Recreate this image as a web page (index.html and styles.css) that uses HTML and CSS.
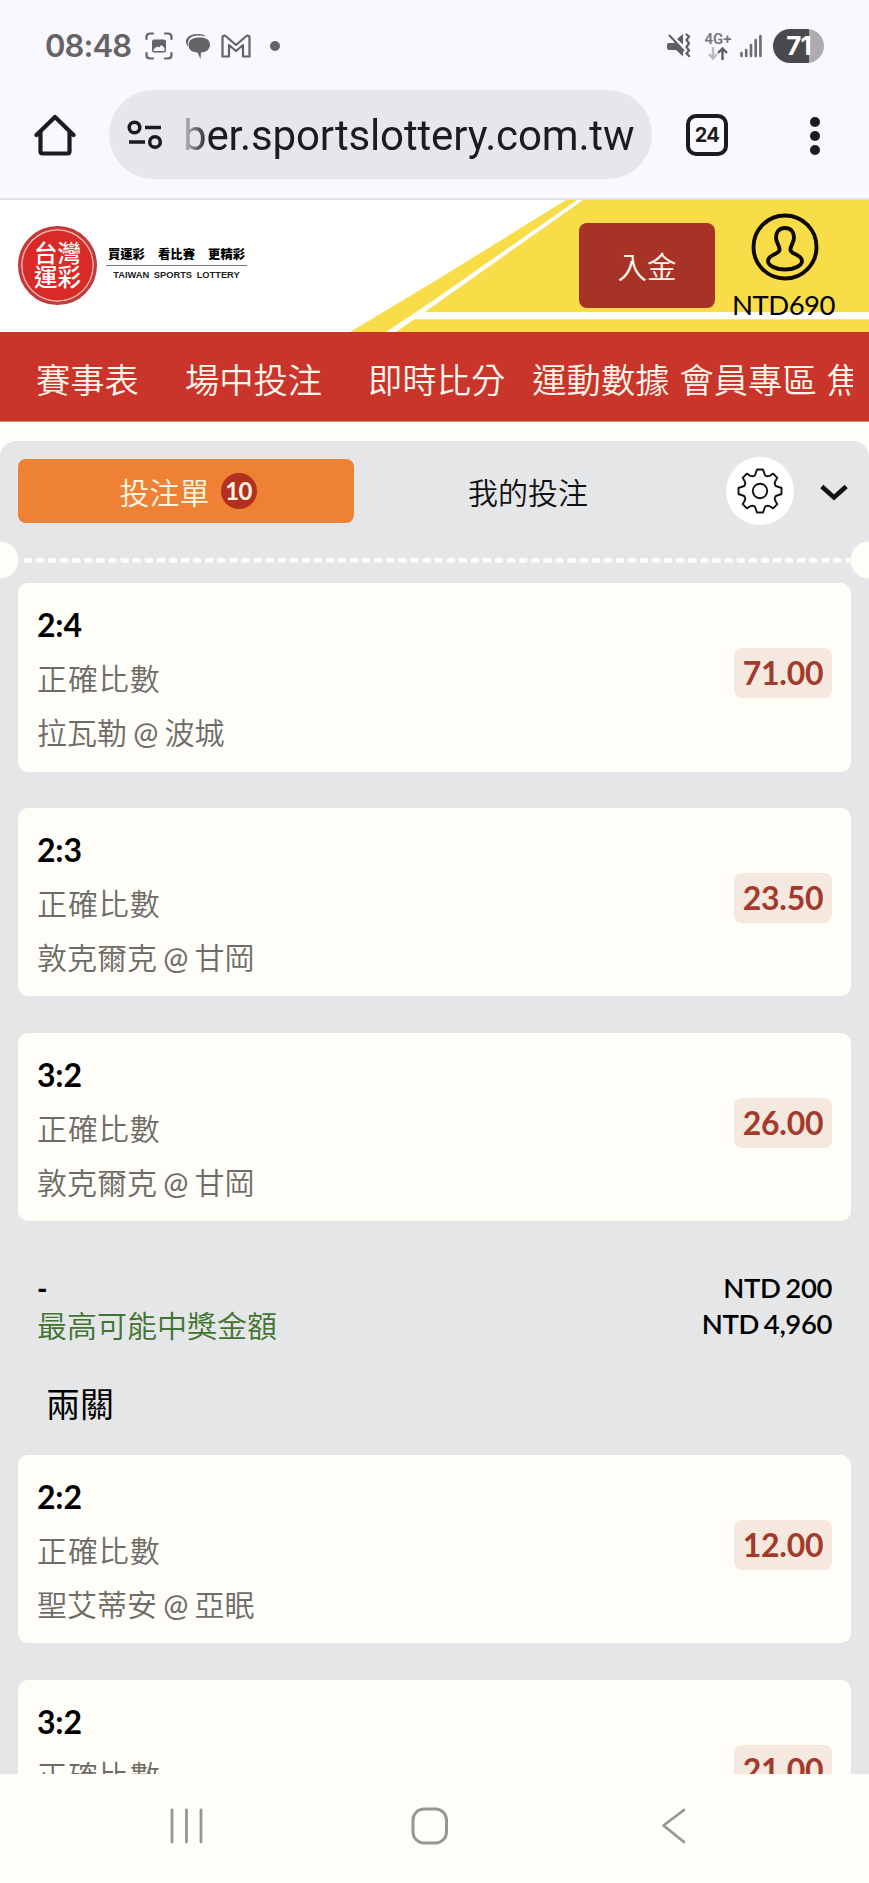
FILE: index.html
```html
<!DOCTYPE html>
<html lang="zh-Hant">
<head>
<meta charset="utf-8">
<title>台灣運彩</title>
<link rel="stylesheet" href="styles.css">
</head>
<body>
<div class="phone">
  <div class="status">
    <span class="clock">08:48</span>
    <svg class="i-shot" width="28" height="28" viewBox="0 0 28 28"><g fill="none" stroke="#646366" stroke-width="2.2" stroke-linecap="round"><path d="M1.5 7V5q0-3.500 3.500-3.500H8M20 1.500h3q3.500 0 3.500 3.500v2M26.500 21v2q0 3.500-3.500 3.500h-3M8 26.500H5q-3.500 0-3.500-3.500v-2"/></g><path fill="#646366" fill-rule="evenodd" d="M9 7.500h10q2 0 2 2v9q0 2-2 2H9q-2 0-2-2v-9q0-2 2-2zM8.500 17.500v1.500h11v-3l-3-3-2.500 2.500-2-1z"/></svg>
    <svg class="i-chat" width="26" height="26" viewBox="0 0 26 26" fill="#646366"><path d="M3 14Q-1 9 2.500 4.500Q6 .5 14 1q5 .3 7 2.500Q17 2.300 12 2.500 6 3 4 6.500 2 10 3 14z"/><path d="M13.500 4.500C20 4 25 6.500 25 11.500s-4 8-9 8L15.500 26l-3-6.500C7 19 3.500 17 3.500 12s4-7.200 10-7.500z"/></svg>
    <svg class="i-mail" width="30" height="24" viewBox="0 0 30 24"><path fill="none" stroke="#646366" stroke-width="2.200" stroke-linejoin="round" d="M1.500 3.500Q1.500 1.500 4 1.500L15 11 26 1.500q2.500 0 2.500 2v19H22V11l-7 6-7-6v11.500H1.500z"/></svg>
    <span class="dot"></span>
    <svg class="i-mute" width="26" height="26" viewBox="0 0 26 26"><g fill="#5f5e62"><path d="M1 11.500q0-1.500 2-1.500h5l1-1 8 8.500v6L10 17H3q-2 0-2-2zM11 6l6-5v10.500z"/></g><path d="M3 2l15 16" stroke="#5f5e62" stroke-width="2"/><path d="M20.500 1.500l2.500 2-2.500 3.500 2.500 3.500-2.500 3.500 2.500 3.500-2.500 3 2.500 2.500" fill="none" stroke="#5f5e62" stroke-width="2.200" stroke-linecap="round"/></svg>
    <span class="net"><b>4G+</b><svg width="22" height="13" viewBox="0 0 22 13" fill="none" stroke-width="2.400"><path stroke="#bbb9bf" d="M6 0v11M2 7l4 4.500L10 7"/><path stroke="#5f5e62" d="M15.500 13V2M11 6l4.500-4.500L20 6"/></svg></span>
    <svg class="i-sig" width="24" height="24" viewBox="0 0 24 24"><path stroke="#6d6c70" stroke-width="2.600" stroke-linecap="round" d="M2.500 19v3M7.200 16v6M12 11v11M16.700 6v16M21.400 2v20"/></svg>
    <span class="batt"><span>71</span></span>
  </div>

  <div class="toolbar">
    <svg class="i-home" width="42" height="42" viewBox="0 0 42 42"><path fill="none" stroke="#1d1b20" stroke-width="4.200" stroke-linecap="round" stroke-linejoin="round" d="M2.500 21L21 3l18.500 18M6.500 18v19.500q0 2 2 2h25q2 0 2-2V18"/></svg>
    <div class="url">
      <svg width="36" height="30" viewBox="0 0 36 30"><g fill="none" stroke="#1d1b20" stroke-width="3.500"><circle cx="7.500" cy="7.500" r="5.300"/><path d="M18 7.500h16M2 22h16"/><circle cx="28" cy="22" r="5.300"/></g></svg>
      <span class="host">ber.sportslottery.com.tw</span>
    </div>
    <span class="tabs-count">24</span>
    <span class="more"><i></i><i></i><i></i></span>
  </div>

  <header class="site">
    <svg class="stripes" width="869" height="132" viewBox="0 0 869 132"><path fill="#f8dd49" d="M350 132L435 81 566 0H869V132z"/><path fill="#fff" d="M386 132L434 100 577 0H583L434 105.500 396 132z"/><path fill="#fff" d="M424 112H869V119.300H414z"/></svg>
    <div class="seal"><span>台灣</span><span>運彩</span></div>
    <div class="slogan"><p class="zh"><span>買運彩</span><span>看比賽</span><span>更精彩</span></p><p class="en">TAIWAN SPORTS LOTTERY</p></div>
    <div class="deposit">入金</div>
    <div class="account">
      <svg width="68" height="68" viewBox="0 0 68 68"><g fill="none" stroke="#0c0a02" stroke-width="3.900"><circle cx="34" cy="34" r="31.500"/><path d="M34 15c-6.500 0-9 4.500-9 9.500 0 5.500 4 8.500 3.500 12.500-.5 4.500-11.500 4.500-11.500 11 0 5 8.500 8.500 17 8.500s17-3.500 17-8.500c0-6.500-11-6.500-11.500-11-.5-4 3.500-7 3.500-12.500 0-5-2.500-9.500-9-9.500z"/></g></svg>
      <span>NTD690</span>
    </div>
  </header>

  <nav class="menu"><a>賽事表</a><a>場中投注</a><a>即時比分</a><a>運動數據</a><a>會員專區</a><a class="cut">焦</a></nav>

  <main class="slip">
    <div class="slip-head">
      <div class="tab on">投注單<span class="badge">10</span></div>
      <div class="tab">我的投注</div>
      <span class="gear"><svg width="46" height="46" viewBox="-23 -23 46 46"><g fill="none" stroke="#111" stroke-width="1.900" stroke-linejoin="round"><circle r="7.200"/><path d="M-3 -21.500H3L5 -15.800Q7.500 -14 9.500 -15.200L13.200 -17.300 17.300 -13.200 15.200 -9.500Q14 -7.500 15.800 -5L21.500 -3V3L15.800 5Q14 7.500 15.200 9.500L17.300 13.200 13.200 17.300 9.500 15.200Q7.500 14 5 15.800L3 21.500H-3L-5 15.800Q-7.500 14 -9.500 15.200L-13.200 17.300 -17.300 13.200 -15.200 9.500Q-14 7.500 -15.800 5L-21.500 3V-3L-15.800 -5Q-14 -7.500 -15.200 -9.500L-17.300 -13.200 -13.200 -17.300 -9.500 -15.200Q-7.500 -14 -5 -15.800z"/></g></svg></span>
      <svg class="chev" width="28" height="18" viewBox="0 0 28 18"><path fill="none" stroke="#111" stroke-width="4.600" d="M1.800 2.500L14 13.500 26.200 2.500"/></svg>
    </div>
    <div class="tear"><svg width="869" height="38" viewBox="0 0 869 38"><path stroke="#fffdf7" stroke-width="4.500" stroke-dasharray="8 4.080" d="M24 19.300H850"/><g fill="#fffdf7"><circle cx="0" cy="19" r="18.500"/><circle cx="869" cy="19" r="18.500"/></g></svg></div>

    <section class="card"><div><h3>2:4</h3><p class="kind">正確比數</p><p>拉瓦勒 <i>@</i> 波城</p></div><b class="odds">71.00</b></section>
    <section class="card"><div><h3>2:3</h3><p class="kind">正確比數</p><p>敦克爾克 <i>@</i> 甘岡</p></div><b class="odds">23.50</b></section>
    <section class="card"><div><h3>3:2</h3><p class="kind">正確比數</p><p>敦克爾克 <i>@</i> 甘岡</p></div><b class="odds">26.00</b></section>

    <div class="sum">
      <div><p class="dash">-</p><p class="win">最高可能中獎金額</p></div>
      <div class="amt"><p>NTD 200</p><p>NTD 4,960</p></div>
    </div>
    <h2>兩關</h2>

    <section class="card"><div><h3>2:2</h3><p class="kind">正確比數</p><p>聖艾蒂安 <i>@</i> 亞眠</p></div><b class="odds">12.00</b></section>
    <section class="card"><div><h3>3:2</h3><p class="kind">正確比數</p></div><b class="odds">21.00</b></section>
  </main>

  <footer class="keys">
    <svg width="34" height="36" viewBox="0 0 34 36"><path stroke="#98978f" stroke-width="2.800" stroke-linecap="round" d="M2 2v32M16.500 2v32M31 2v32"/></svg>
    <svg width="38" height="38" viewBox="0 0 38 38"><rect x="2" y="2" width="33.500" height="34" rx="11" fill="none" stroke="#98978f" stroke-width="3"/></svg>
    <svg width="25" height="36" viewBox="0 0 25 36"><path fill="none" stroke="#98978f" stroke-width="2.800" stroke-linecap="round" stroke-linejoin="round" d="M23 2L2.500 17.500 23 34"/></svg>
  </footer>
</div>
</body>
</html>
```

FILE: styles.css
```css
* { box-sizing: border-box; }
body { margin: 0; background: #fffdf7; font-family: Lato, "Noto Sans CJK TC", sans-serif; color: #000; }
p, h2, h3 { margin: 0; font-weight: 400; }
svg { display: block; flex: none; }
.phone { width: 869px; height: 1883px; overflow: hidden; display: flex; flex-direction: column; }

/* Android status bar */
.status { height: 90px; flex: none; background: #faf8ff; display: flex; align-items: center; padding: 2px 45px 0; }
.clock { width: 100px; font: 600 31px/40px Inter, sans-serif; letter-spacing: -0.9px; color: #646366; }
.i-chat { margin-left: 12px; }
.i-mail { margin-left: 10px; }
.dot { width: 10px; height: 10px; border-radius: 50%; background: #646366; margin-left: 19px; }
.i-mute { margin-left: auto; }
.net { width: 30px; margin-left: 11px; display: flex; flex-direction: column; align-items: center; }
.net b { font: 600 15px/15px Roboto, sans-serif; color: #77767a; }
.i-sig { margin-left: 6px; }
.batt { width: 51px; height: 34px; margin-left: 10px; border-radius: 17px; background: linear-gradient(90deg, #4a494c 71%, #aeacb2 71%); color: #fff; font: 700 26px/34px Inter, sans-serif; text-align: center; letter-spacing: -1px; }

/* Browser toolbar */
.toolbar { height: 110px; flex: none; background: #faf8ff; border-bottom: 2px solid #e3e1e8; display: flex; align-items: flex-start; padding-left: 34px; }
.i-home { margin-top: 24px; }
.url { width: 543px; height: 89px; margin-left: 33px; border-radius: 45px; background: #e8e6ed; display: flex; align-items: center; padding-left: 18px; overflow: hidden; }
.host { margin: 2px 0 0 20px; font: 400 42px/60px Roboto, sans-serif; letter-spacing: -0.15px; color: transparent; background: linear-gradient(90deg, #c4c2c9 0, #1d1b20 26px); -webkit-background-clip: text; background-clip: text; white-space: nowrap; }
.tabs-count { width: 42px; height: 42px; margin: 24px 0 0 34px; border: 4px solid #1d1b20; border-radius: 10px; font: 700 20px/34px Inter, sans-serif; letter-spacing: -0.7px; text-align: center; color: #1d1b20; }
.more { margin: 27px 0 0 82px; display: grid; gap: 4px; }
.more i { width: 10px; height: 10px; border-radius: 50%; background: #1d1b20; }

/* Site header */
.site { position: relative; height: 132px; flex: none; background: #fff; display: flex; align-items: flex-start; padding-left: 18px; }
.stripes { position: absolute; left: 0; top: 0; }
.seal { position: relative; flex: none; width: 79px; height: 79px; margin-top: 26px; padding-top: 11px; border-radius: 50%; background: #d82a27; border: 3px solid #c23a3c; box-shadow: inset 0 0 0 1.500px #f3b9b0; color: #fff; text-align: center; }
.seal span { display: block; font: 500 23.500px/24px "Noto Sans CJK TC", sans-serif; }
.slogan { position: relative; width: 141px; margin: 41px 0 0 9px; text-align: center; }
.zh { height: 25px; border-bottom: 1px solid #777; display: flex; justify-content: space-between; padding: 0 2px; font: 900 12.300px/26px "Noto Sans CJK TC", sans-serif; }
.en { font: 700 9.300px/18px "Liberation Sans", sans-serif; word-spacing: 2px; color: #222; white-space: nowrap; }
.deposit { position: relative; width: 136px; height: 85px; margin: 23px 0 0 332px; border-radius: 8px; background: #a73326; color: #fff6ec; font-size: 29.600px; font-weight: 350; line-height: 85px; text-align: center; padding-top: 1px; }
.account { position: relative; width: 140px; margin-top: 13px; display: flex; flex-direction: column; align-items: center; }
.account span { font-size: 27.500px; line-height: 34px; margin: 7px 3px 0 0; letter-spacing: -0.5px; }

.menu { height: 90px; flex: none; background: #c9352b; display: flex; padding-left: 36px; font-size: 34.300px; line-height: 96px; font-weight: 350; color: #fff6ec; white-space: nowrap; border-bottom: 1px solid #dc8a80; }
.menu a { flex: none; }
.menu a:nth-child(2) { margin-left: 46px; }
.menu a:nth-child(3) { margin-left: 46px; }
.menu a:nth-child(4) { margin-left: 27px; }
.menu a:nth-child(5) { margin-left: 10px; }
.menu .cut { margin-left: 10px; width: 26px; overflow: hidden; }

/* Betting slip */
.slip { margin-top: 19px; height: 1333px; flex: none; overflow: hidden; background: #e5e6e8; border-radius: 16px 16px 0 0; }
.slip-head { height: 100px; display: flex; align-items: center; padding-left: 18px; font-size: 30px; font-weight: 350; color: #111; }
.tab { width: 336px; height: 64px; line-height: 67px; border-radius: 8px; display: flex; justify-content: center; padding-left: 12px; }
.tab.on { background: #ee8133; color: #fff6e2; padding-left: 4px; }
.badge { width: 36px; height: 36px; margin: 14px 0 0 11px; border-radius: 50%; background: #b1301f; font-size: 24px; font-weight: 700; line-height: 36px; text-align: center; letter-spacing: -0.6px; }
.gear { width: 68px; height: 68px; margin-left: 36px; border-radius: 50%; background: #fff; display: grid; place-items: center; }
.chev { margin-left: 26px; margin-top: 4px; }
.tear { height: 42px; }
.card { height: 188.500px; margin: 0 18px 36.400px; padding: 22px 19px 0 19px; border-radius: 10px; background: #fffdf7; display: flex; justify-content: space-between; color: #6d6c68; }
.card h3 { font-size: 32px; line-height: 40px; font-weight: 700; letter-spacing: -0.2px; color: #000; }
.card p { font-size: 30px; line-height: 54px; font-weight: 350; word-spacing: -2px; }
.card i { font-style: normal; font-weight: 400; }
.card .kind { letter-spacing: 0.900px; line-height: 52px; margin-top: 7px; }
.card p + p { margin-top: 1px; }
.odds { height: 50px; width: 98px; margin-top: 43px; border-radius: 8px; background: #f5e8df; color: #a23a2d; font-size: 32px; line-height: 49px; text-align: center; letter-spacing: -0.3px; }
.sum { display: flex; justify-content: space-between; height: 94px; padding: 12.500px 37px 0; }
.dash { font-weight: 900; font-size: 28px; line-height: 37px; }
.win { font-size: 30px; line-height: 36px; font-weight: 350; color: #427331; }
.amt { text-align: right; font-size: 27.500px; line-height: 35.500px; letter-spacing: -0.4px; word-spacing: -1.500px; }
.amt p { font-weight: 600; }
h2 { height: 103px; padding-left: 46px; font-size: 34px; line-height: 104px; }

/* System navigation keys */
.keys { height: 109px; flex: none; background: #fffdf7; display: flex; align-items: flex-start; padding: 34px 0 0 170px; }
.keys svg:nth-child(2) { margin: -1px 0 0 207px; }
.keys svg:nth-child(3) { margin-left: 212px; }
```
